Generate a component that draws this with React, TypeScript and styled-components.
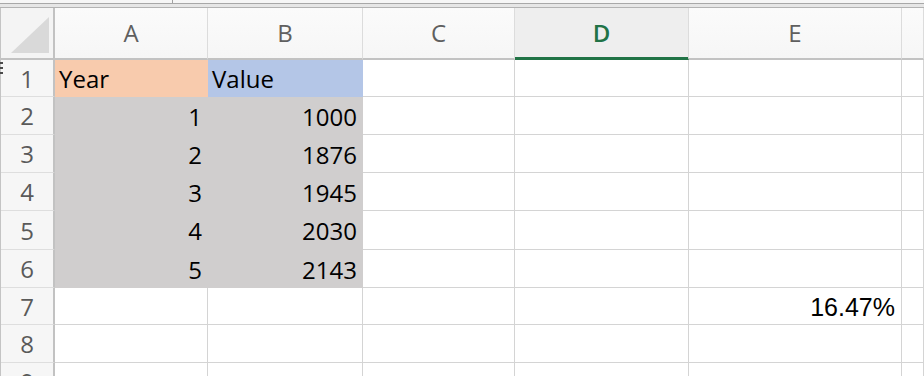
import { Fragment } from "react";
import styled, { createGlobalStyle } from "styled-components";

const GlobalStyle = createGlobalStyle`
  html, body {
    margin: 0;
    padding: 0;
    background: #ffffff;
    overflow: hidden;
  }
`;

const COLUMNS = "54px 153px 155px 152px 174px 213px 1fr";

const Page = styled.div`
  width: 924px;
  height: 376px;
  overflow: hidden;
  font-family: "Open Sans", "Noto Sans", sans-serif;
`;

const TopStrip = styled.div`
  display: flex;
  height: 8px;
  box-sizing: border-box;
  border-top: 3px solid #f6f6f6;
  border-bottom: 1px solid #b3b3b3;
  box-shadow: inset 0 1px 0 #a8a8a8;
  background-color: #e6e6e6;
  padding-left: 172px;
`;

const StripTick = styled.div`
  width: 1px;
  height: 3px;
  margin-top: -3px;
  background: #a0a0a0;
`;

const Grid = styled.div`
  display: grid;
  grid-template-columns: ${COLUMNS};
  border-left: 1px solid #c4c4c4;
`;

const Corner = styled.div`
  display: flex;
  height: 52px;
  box-sizing: border-box;
  padding: 9px 4px 5px 10px;
  background: #f4f4f4;
  border-right: 2px solid #c2c2c2;
  border-bottom: 2px solid #c2c2c2;
`;

const CornerTriangle = styled.div`
  flex: 1;
  background: #d9d9d9;
  clip-path: polygon(100% 0, 100% 100%, 0 100%);
`;

const ColHeader = styled.div<{ $active?: boolean }>`
  height: 52px;
  box-sizing: border-box;
  display: flex;
  align-items: center;
  justify-content: center;
  padding-bottom: 2px;
  background: ${(p) =>
    p.$active ? "#eeeeee" : "linear-gradient(#fbfbfb, #f6f6f6)"};
  border-right: 1px solid #dcdcdc;
  border-bottom: 2px solid ${(p) => (p.$active ? "#217346" : "#c2c2c2")};
  box-shadow: ${(p) => (p.$active ? "inset 0 -1px 0 #217346" : "none")};
  color: ${(p) => (p.$active ? "#217346" : "#5f5f5f")};
  font-size: 24px;
  font-weight: ${(p) => (p.$active ? 600 : 400)};
`;

const RowHeader = styled.div<{ $h: number }>`
  position: relative;
  height: ${(p) => p.$h}px;
  box-sizing: border-box;
  display: flex;
  align-items: center;
  justify-content: center;
  background: #f6f6f6;
  border-right: 2px solid #c2c2c2;
  border-bottom: 1px solid #dedede;
  color: #5a5a5a;
  font-size: 24px;
`;

// small drag handle marks that sit over the left edge of the row header
const Grip = styled.div`
  position: absolute;
  left: -1px;
  top: 2px;
  width: 3px;
  height: 14px;
  background: repeating-linear-gradient(
    #4a4a4a 0 2px,
    transparent 2px 5px
  );
`;

const Cell = styled.div<{ $h: number; $fill?: string; $align?: string; $arial?: boolean }>`
  height: ${(p) => p.$h}px;
  box-sizing: border-box;
  display: flex;
  align-items: center;
  justify-content: ${(p) => (p.$align === "right" ? "flex-end" : "flex-start")};
  padding: ${(p) => (p.$arial ? "2px 6px 0 4px" : "1px 5px 0 4px")};
  background: ${(p) => p.$fill || "#ffffff"};
  border-right: 1px solid ${(p) => p.$fill || "#d4d4d4"};
  border-bottom: 1px solid ${(p) => p.$fill || "#d4d4d4"};
  color: #000000;
  font-family: ${(p) =>
    p.$arial ? '"Liberation Sans", Arial, sans-serif' : '"Open Sans", sans-serif'};
  font-size: ${(p) => (p.$arial ? 25 : 24)}px;
  white-space: nowrap;
  overflow: hidden;
`;

type CellData = { text?: string; fill?: string; align?: string; arial?: boolean };

const ORANGE = "#f8cbad";
const BLUE = "#b4c6e7";
const GRAY = "#d0cece";

const columns = ["A", "B", "C", "D", "E", ""];
const rowHeights = [37, 38, 38, 38, 39, 38, 37, 38, 38];

const values: [string, string][] = [
  ["1", "1000"],
  ["2", "1876"],
  ["3", "1945"],
  ["4", "2030"],
  ["5", "2143"],
];

const buildRow = (i: number): CellData[] => {
  const row: CellData[] = [{}, {}, {}, {}, {}, {}];
  if (i === 0) {
    row[0] = { text: "Year", fill: ORANGE };
    row[1] = { text: "Value", fill: BLUE };
  } else if (i >= 1 && i <= 5) {
    const [year, value] = values[i - 1];
    row[0] = { text: year, fill: GRAY, align: "right" };
    row[1] = { text: value, fill: GRAY, align: "right" };
  } else if (i === 6) {
    row[4] = { text: "16.47%", align: "right", arial: true };
  }
  return row;
};

const App = () => {
  return (
    <Page>
      <GlobalStyle />
      <TopStrip>
        <StripTick />
      </TopStrip>
      <Grid>
        <Corner>
          <CornerTriangle />
        </Corner>
        {columns.map((c, i) => (
          <ColHeader key={i} $active={c === "D"}>
            {c}
          </ColHeader>
        ))}
        {rowHeights.map((h, r) => (
          <Fragment key={r}>
            <RowHeader $h={h}>
              {r === 0 && <Grip />}
              {r + 1}
            </RowHeader>
            {buildRow(r).map((cell, c) => (
              <Cell
                key={c}
                $h={h}
                $fill={cell.fill}
                $align={cell.align}
                $arial={cell.arial}
              >
                {cell.text}
              </Cell>
            ))}
          </Fragment>
        ))}
      </Grid>
    </Page>
  );
};

export default App;
